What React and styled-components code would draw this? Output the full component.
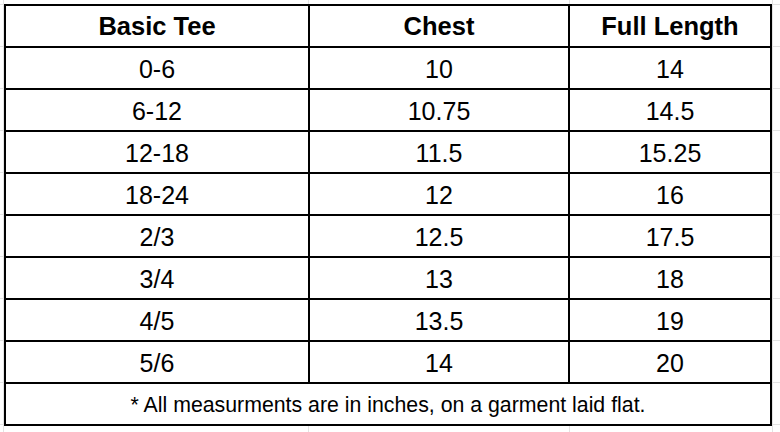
import React from "react";
import styled, { createGlobalStyle } from "styled-components";

const GlobalStyle = createGlobalStyle`
  html, body { margin: 0; padding: 0; background: #ffffff; }
  body { font-family: "Liberation Sans", Arial, sans-serif; color: #000; }
`;

const Page = styled.div`
  width: 780px;
  height: 432px;
  box-sizing: border-box;
  padding: 4px 0 0 4px;
  background-color: #ffffff;
  background-image:
    linear-gradient(to bottom, #e3e3e3 0 1px, transparent 1px),
    linear-gradient(to right, transparent 0 3px, #e3e3e3 3px 4px, transparent 4px),
    linear-gradient(to right, transparent 0 308px, #e3e3e3 308px 309px, transparent 309px),
    linear-gradient(to right, transparent 0 569px, #e3e3e3 569px 570px, transparent 570px),
    linear-gradient(to right, transparent 0 772px, #e3e3e3 772px 773px, transparent 773px);
  background-size: 100% 42px, 100% 100%, 100% 100%, 100% 100%, 100% 100%;
  background-position: 0 4px, 0 0, 0 0, 0 0, 0 0;
  background-repeat: repeat, no-repeat, no-repeat, no-repeat, no-repeat;
  overflow: hidden;
`;

const Table = styled.div`
  display: grid;
  grid-template-columns: 302px 258px 200px;
  grid-auto-rows: 40px;
  gap: 2px;
  padding: 2px;
  background: #000;
  width: max-content;
`;

const Cell = styled.div`
  background: #fff;
  display: flex;
  align-items: center;
  justify-content: center;
  padding-top: ${(p) => (p.$head ? "1px" : "3px")};
  box-sizing: border-box;
  font-size: ${(p) => (p.$head ? "25.5px" : "25px")};
  font-weight: ${(p) => (p.$head ? 700 : 400)};
  white-space: nowrap;
`;

const Footer = styled.div`
  grid-column: 1 / -1;
  background: #fff;
  display: flex;
  align-items: center;
  justify-content: center;
  padding-top: 2px;
  box-sizing: border-box;
  font-size: 21.3px;
  white-space: nowrap;
`;

const rows = [
  ["0-6", "10", "14"],
  ["6-12", "10.75", "14.5"],
  ["12-18", "11.5", "15.25"],
  ["18-24", "12", "16"],
  ["2/3", "12.5", "17.5"],
  ["3/4", "13", "18"],
  ["4/5", "13.5", "19"],
  ["5/6", "14", "20"],
];

export default function App() {
  return (
    <>
      <GlobalStyle />
      <Page>
        <Table>
          <Cell $head>Basic Tee</Cell>
          <Cell $head>Chest</Cell>
          <Cell $head>Full Length</Cell>
          {rows.map((r) =>
            r.map((v, i) => <Cell key={r[0] + i}>{v}</Cell>)
          )}
          <Footer>* All measurments are in inches, on a garment laid flat.</Footer>
        </Table>
      </Page>
    </>
  );
}
